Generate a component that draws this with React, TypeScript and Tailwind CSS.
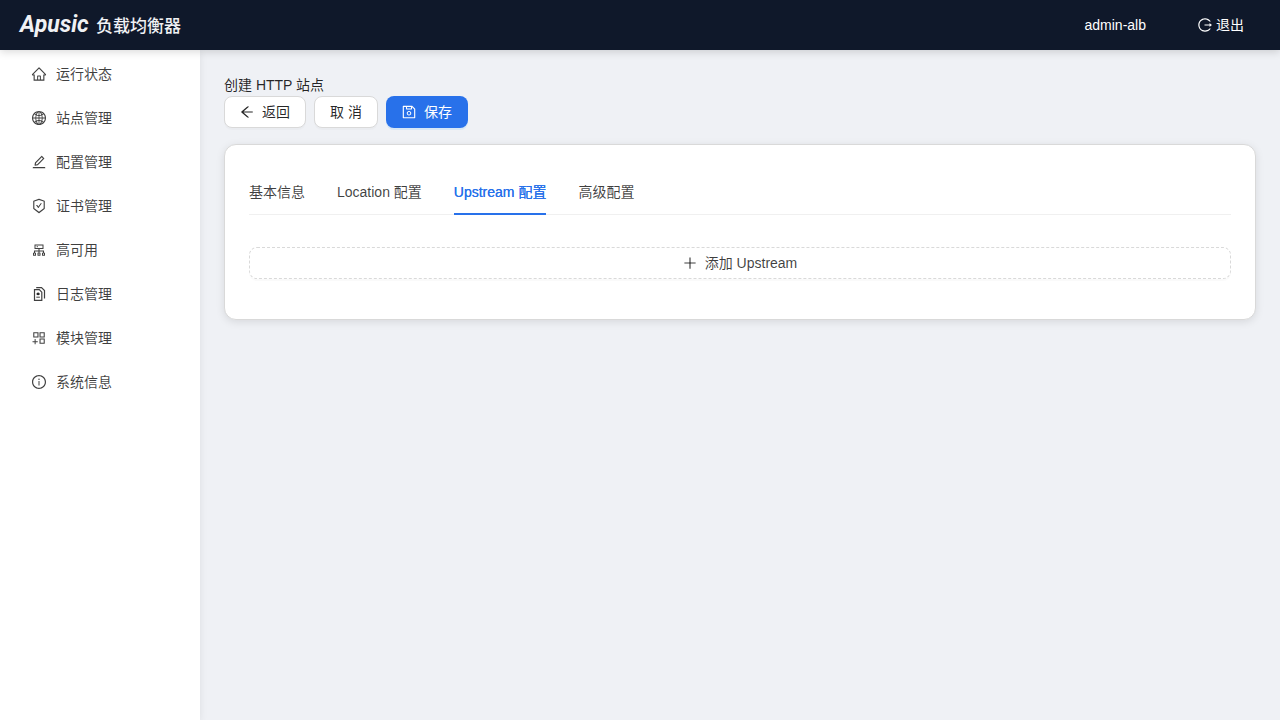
import React from "react";
import {
    AiOutlineAppstoreAdd,
    AiOutlineArrowLeft,
    AiOutlineCluster,
    AiOutlineEdit,
    AiOutlineGlobal,
    AiOutlineHome,
    AiOutlineInfoCircle,
    AiOutlineLogout,
    AiOutlinePlus,
    AiOutlineSafetyCertificate,
    AiOutlineSave,
} from "react-icons/ai";

// stacked log files, not in the icon set
function LogIcon({className}: {className?: string}) {
    return (
        <svg className={className} viewBox="0 0 16 16" fill="none" stroke="currentColor" strokeWidth="1.2">
            <path d="M3.5 3.7h4.8l2.5 2.5v8.2H3.5z"/>
            <path d="M5.2 1.6h5.3l3 3v8"/>
            <circle cx="7.1" cy="7.9" r="0.7"/>
            <path d="M5.3 8h3.6M5.3 11.2h3.6" strokeWidth="1"/>
        </svg>
    );
}

const menu = [
    {label: "运行状态", icon: AiOutlineHome},
    {label: "站点管理", icon: AiOutlineGlobal},
    {label: "配置管理", icon: AiOutlineEdit},
    {label: "证书管理", icon: AiOutlineSafetyCertificate},
    {label: "高可用", icon: AiOutlineCluster},
    {label: "日志管理", icon: LogIcon},
    {label: "模块管理", icon: AiOutlineAppstoreAdd},
    {label: "系统信息", icon: AiOutlineInfoCircle},
];

const tabs = ["基本信息", "Location 配置", "Upstream 配置", "高级配置"];

function Header() {
    return (
        <header className="relative z-10 flex h-[50px] items-center justify-between bg-[#0f182a] pl-5 pr-9 text-white shadow-[0_2px_8px_rgba(0,0,0,0.15)]">
            <a href="#" className="flex items-center gap-1.5 text-[#f0f1f4]">
                <span className="w-[70px] font-['Roboto','Liberation_Sans',sans-serif] text-[23px] font-bold italic leading-[30px]">Apusic</span>
                <span className="pt-1 text-[17px] font-medium leading-[30px]">负载均衡器</span>
            </a>
            <div className="flex items-center gap-[52px]">
                <span>admin-alb</span>
                <button type="button" className="flex items-center gap-1">
                    <AiOutlineLogout className="-m-px size-4"/>
                    退出
                </button>
            </div>
        </header>
    );
}

function Sidebar() {
    return (
        <nav className="w-[200px] shrink-0 bg-white shadow-[0_2px_8px_rgba(0,0,0,0.08)]">
            <ul className="flex flex-col gap-1 pt-1">
                {menu.map(({label, icon: Icon}) => (
                    <li key={label}>
                        <a href="#" className="flex h-10 items-center gap-2.5 pl-8 text-black/75">
                            <Icon className="-m-px size-4"/>
                            {label}
                        </a>
                    </li>
                ))}
            </ul>
        </nav>
    );
}

export default function App() {
    return (
        <div className="flex min-h-screen flex-col bg-[#eff1f5] font-['Liberation_Sans','Noto_Sans_CJK_SC',sans-serif] text-[14px] leading-[22px] text-black/85">
            <Header/>
            <div className="flex grow">
                <Sidebar/>
                <main className="min-w-0 grow p-6">
                    <h1>创建 HTTP 站点</h1>
                    <div className="flex gap-2">
                        <button type="button" className="flex h-8 items-center gap-2 rounded-lg border border-[#d9d9d9] bg-white px-[15px] shadow-[0_2px_0_rgba(0,0,0,0.02)]">
                            <AiOutlineArrowLeft className="-m-px size-4"/>
                            返回
                        </button>
                        <button type="button" className="h-8 rounded-lg border border-[#d9d9d9] bg-white px-[15px] shadow-[0_2px_0_rgba(0,0,0,0.02)]">取 消</button>
                        <button type="button" className="flex h-8 items-center gap-2 rounded-lg bg-[#2871ea] px-4 text-white shadow-[0_2px_0_rgba(5,145,255,0.1)]">
                            <AiOutlineSave className="-m-px size-4"/>
                            保存
                        </button>
                    </div>
                    <section className="mt-4 rounded-xl border border-[#d9d9d9] bg-white px-6 pb-10 pt-6 shadow-[0_2px_8px_rgba(0,0,0,0.1)]">
                        <div role="tablist" className="mb-8 flex gap-8 border-b border-[#f0f0f0] text-black/75">
                            {tabs.map((tab, i) => (
                                <button
                                    key={tab}
                                    type="button"
                                    role="tab"
                                    aria-selected={i === 2}
                                    className="-mb-px border-b-2 border-transparent pb-2.5 pt-3 aria-selected:border-[#2871ea] aria-selected:text-[#2871ea] aria-selected:[text-shadow:0_0_0.25px_currentcolor]"
                                >
                                    {tab}
                                </button>
                            ))}
                        </div>
                        <button type="button" className="flex h-8 w-full items-center justify-center gap-2 rounded-lg border border-dashed border-[#d9d9d9] text-black/75 shadow-[0_2px_0_rgba(0,0,0,0.02)]">
                            <AiOutlinePlus className="-m-px size-4"/>
                            添加 Upstream
                        </button>
                    </section>
                </main>
            </div>
        </div>
    );
}
